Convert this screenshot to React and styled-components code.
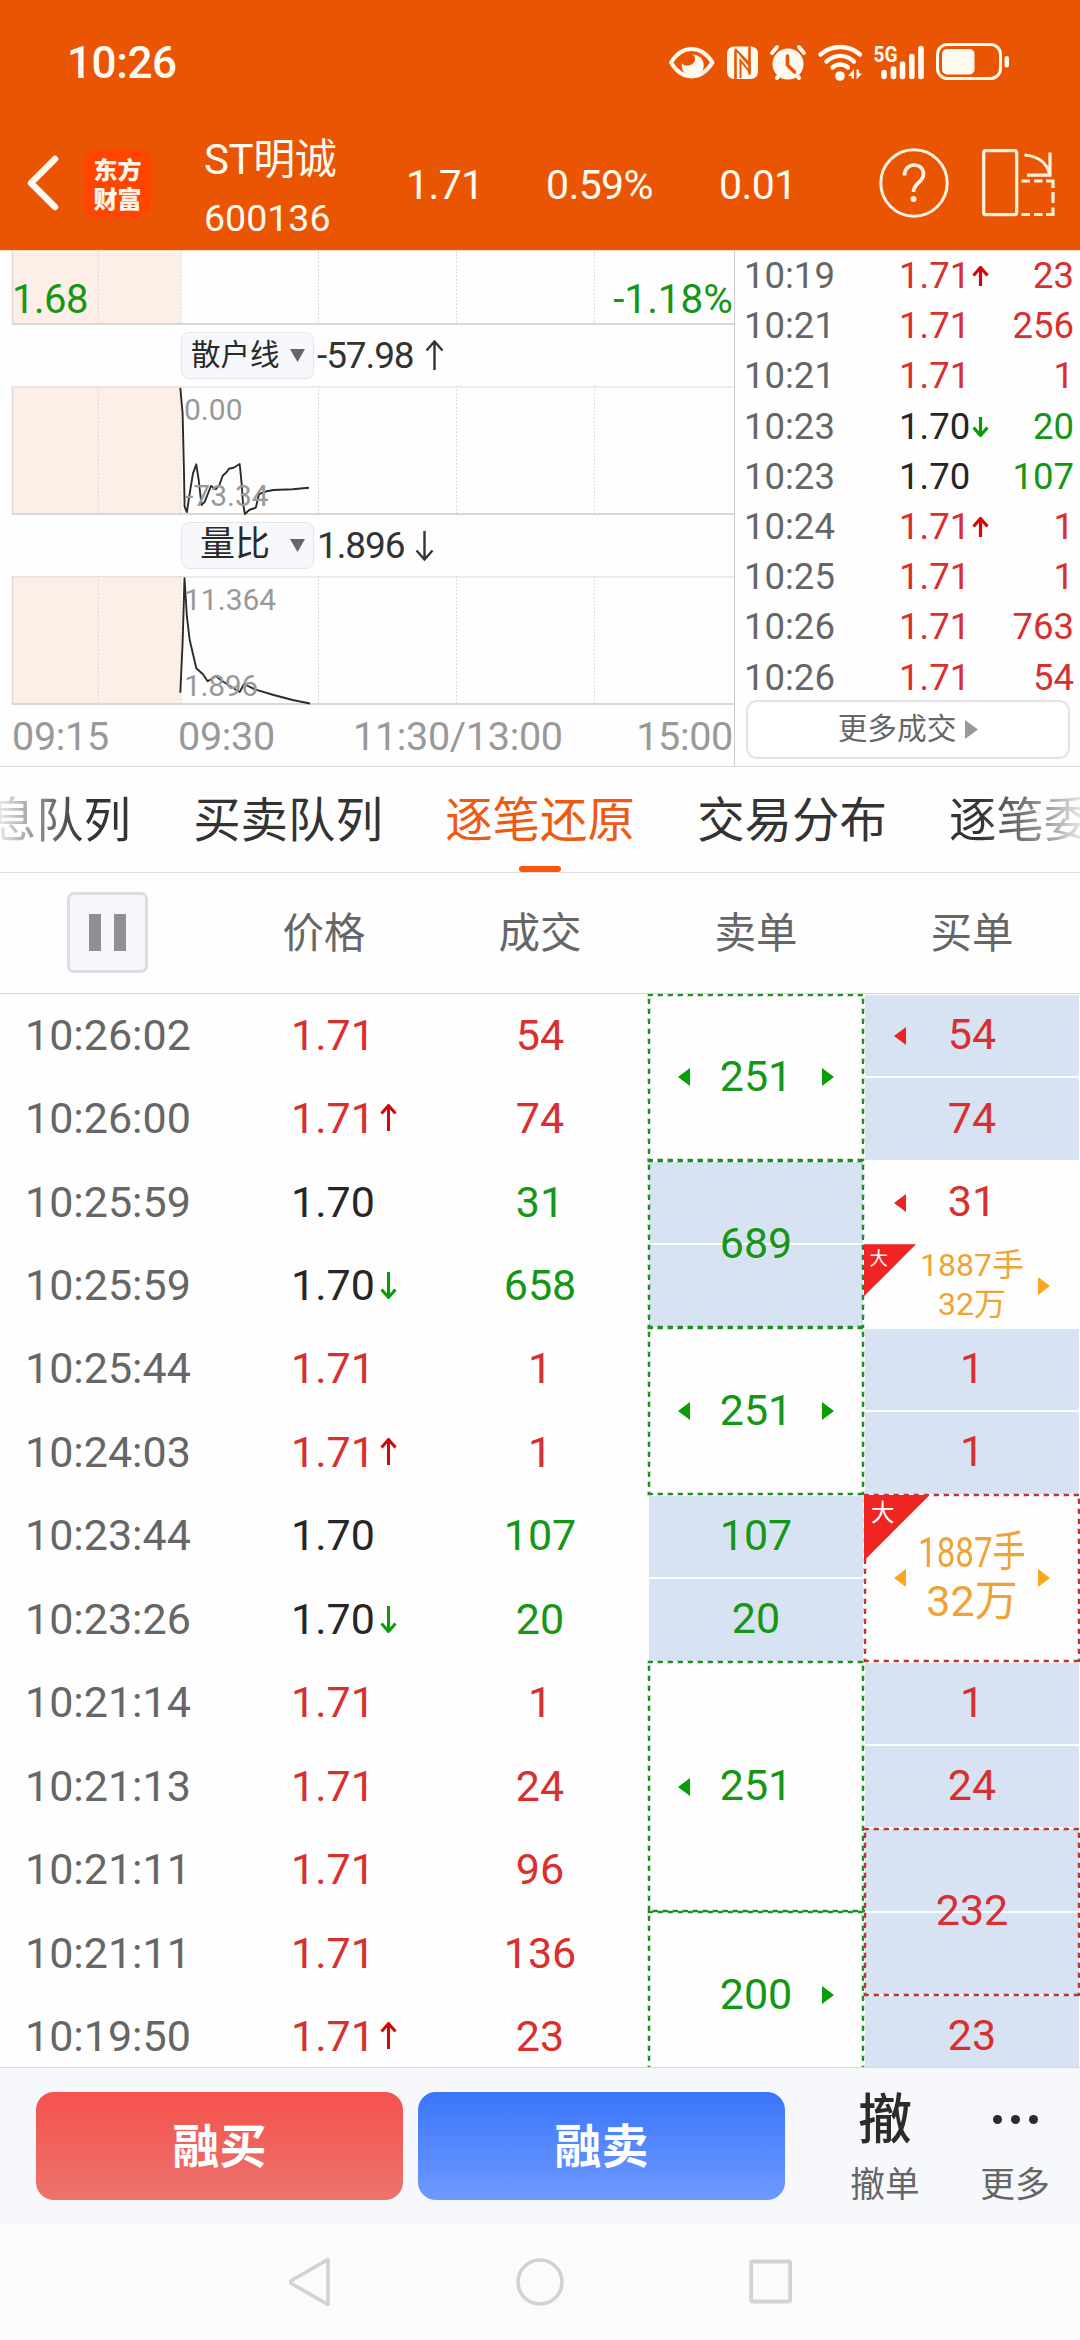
import React from 'react';
import styled, { createGlobalStyle, css } from 'styled-components';

const C = {
  brand: '#ea5504',
  red: '#d92f2f',
  green: '#159615',
  ink: '#262626',
  gray: '#666666',
  muted: '#999999',
  orange: '#efa337',
  blue: '#d7e3f2',
};
const ROW = 83.45;

const Global = createGlobalStyle`
  * { box-sizing: border-box; }
  html, body { margin: 0; padding: 0; }
  body {
    width: 1080px; height: 2340px; overflow: hidden; background: #fefefe;
    font-family: Roboto, "Noto Sans CJK SC", sans-serif;
  }
  svg { display: block; flex: none; }
`;

const Screen = styled.div`
  width: 1080px; height: 2340px; overflow: hidden;
  display: flex; flex-direction: column; background: #fefefe;
`;

/* ---------- top ---------- */
const Top = styled.header`
  height: 250px; flex: none; background: ${C.brand}; color: #fffaf0;
`;
const StatusBar = styled.div`
  height: 124px; padding: 0 70px 0 67px;
  display: flex; align-items: center; justify-content: space-between;
`;
const Clock = styled.div`
  font-size: 44px; font-weight: 500; line-height: 52px; letter-spacing: -0.4px; color: #fffaf0; padding-top: 2px;
`;
const NavBar = styled.div`
  height: 118px; padding-left: 26px; display: flex; align-items: center;
`;
const Logo = styled.div`
  width: 67px; height: 67px; margin-left: 24px; border-radius: 13px; background: #ff4400;
  display: flex; flex-direction: column; align-items: center; justify-content: center;
  font-family: "Noto Sans CJK SC", sans-serif; font-weight: 900; font-size: 24px; line-height: 29px; color: #fff4ea;
`;
const Stock = styled.div`
  width: 202px; margin-left: 53px; padding-top: 12px; display: flex; flex-direction: column;
`;
const StockName = styled.div`font-size: 42px; line-height: 58px; letter-spacing: -0.4px;`;
const StockCode = styled.div`font-size: 37.5px; line-height: 58px;`;
const Quote = styled.div`
  width: ${p => p.$w}px; font-size: 41px; line-height: 50px; padding-top: 3px; letter-spacing: -0.6px;
`;

/* ---------- charts ---------- */
const Market = styled.section`
  height: 517px; flex: none; display: flex; border-top: 1px solid #f5dccd; border-bottom: 1px solid #dcdcdc;
`;
const Charts = styled.div`
  width: 735px; flex: none; border-right: 1px solid #cccccc; display: flex; flex-direction: column;
`;
const IndicatorRow = styled.div`
  height: ${p => p.$h}px; padding: 0 0 0 181px; display: flex; align-items: center;
`;
const Picker = styled.button`
  width: 133px; height: 47px; padding: 0 8px 0 ${p => p.$pad}px; border: 1.5px solid #e4e7ea; border-radius: 8px;
  background: #f6f8fb; display: flex; align-items: center; justify-content: space-between;
  font-family: inherit; font-size: ${p => p.$size}px; line-height: 44px; color: #2a2a2a;
`;
const PickerLabel = styled.span`line-height: 44px; margin-top: -1px;`;
const IndicatorValue = styled.span`
  margin: 0 11px 0 3px; font-size: 37px; line-height: 44px; letter-spacing: -1.1px; color: #333333;
`;
const Axis = styled.div`
  height: 61px; padding: 2px 1px 0 12px; color: ${C.muted}; font-size: 39.5px; line-height: 60px; letter-spacing: -0.3px;
  display: grid; grid-template-columns: 166px 175px 1fr auto;
`;

const Trades = styled.div`flex: 1; display: flex; flex-direction: column;`;
const TradeRow = styled.div`
  height: 50.2px; flex: none; padding: 0 6px 0 9px; display: grid; grid-template-columns: 155px 1fr auto; align-items: center;
  font-size: 36.5px; line-height: 48px;
`;
const Tone = styled.span`
  color: ${p => C[p.$c]};
  display: flex; align-items: center; gap: ${p => p.$gap || 0}px;
`;
const MoreTrades = styled.button`
  width: 324px; height: 59px; flex: none; margin: -3px 0 0 11px; padding: 0; border: 2px solid #e3e3e3; border-radius: 11px; background: #fff;
  display: flex; align-items: center; justify-content: center; gap: 9px;
  font-family: inherit; font-size: 29.7px; line-height: 50px; color: ${C.gray};
`;

/* ---------- tabs ---------- */
const Tabs = styled.nav`
  height: 106px; flex: none; overflow: hidden; border-bottom: 1px solid #dedede;
  display: flex; justify-content: center; gap: 62px;
`;
const Tab = styled.div`
  width: 190px; flex: none; display: flex; flex-direction: column; align-items: ${p => p.$align || 'center'};
  justify-content: space-between; white-space: nowrap; font-size: 47.4px; line-height: 98px; padding-top: 5px;
  color: ${p => (p.$active ? '#ee5a12' : '#333333')};
`;
const FadeLabel = styled.span`
  ${p => p.$from && css`
    color: transparent; background-clip: text; -webkit-background-clip: text;
    background-image: linear-gradient(to ${p.$from}, #fefefe 0, #a8a8a8 38px, #333 ${p.$len}px);
  `}
`;
const Underline = styled.i`width: 42px; height: 6px; border-radius: 3px; background: #fa560c; margin-top: -6px;`;

/* ---------- ledger ---------- */
const LedgerHead = styled.div`
  height: 121px; flex: none; border-bottom: 1px solid #d2d4d6;
  display: grid; grid-template-columns: repeat(5, 216px); align-items: center; justify-items: center;
  font-size: 41.5px; line-height: 60px; color: ${C.gray};
`;
const HeadLabel = styled.span`padding-top: 2px;`;
const Pause = styled.button`
  width: 81px; height: 81px; margin: -1px 0 0 -2px; padding: 0; border: 3px solid #dadde1; border-radius: 7px; background: #f6f8fb;
  display: flex; align-items: center; justify-content: center; gap: 13px;
`;
const PauseBar = styled.i`width: 12px; height: 37px; background: #8f9093;`;

const LedgerWindow = styled.section`height: 1073px; flex: none; overflow: hidden; background: #fefefe;`;
const Ledger = styled.div`
  display: grid; grid-template-columns: repeat(5, 216px); grid-template-rows: repeat(13, ${ROW}px);
  font-size: 43px; line-height: 50px;
`;
const place = css`
  grid-column: ${p => p.$col}; grid-row: ${p => p.$row} / span ${p => p.$span || 1};
`;
const Fill = styled.div`${place} margin: 1px; background: ${C.blue};`;
const Cell = styled.div`
  ${place}
  display: flex; align-items: center; justify-content: ${p => (p.$left ? 'flex-start' : 'center')};
  padding: 0 0 2px ${p => p.$left || 0}px; gap: 5px;
  color: ${p => C[p.$c]};
`;
const dash = (dir, c, off) =>
  `repeating-linear-gradient(${dir}, ${c} 0 5px, transparent 5px 10px) ${off} no-repeat`;
const edges = (c, t, inset, phase) => [
  dash('to right', c, `${inset}px ${inset}px / calc(100% - ${2 * inset}px) ${t}px`),
  dash('to right', c, `${inset + phase}px calc(100% - ${inset}px) / calc(100% - ${2 * inset}px) ${t}px`),
  dash('to bottom', c, `${inset}px ${5 + inset}px / ${t}px calc(100% - ${6 + inset}px)`),
  dash('to bottom', c, `calc(100% - ${inset}px) ${5 + inset}px / ${t}px calc(100% - ${6 + inset}px)`),
].join(',');
const Order = styled.div`
  ${place}
  position: relative; z-index: 1; padding: 0 30px;
  display: grid; grid-template-columns: 12px minmax(0, 1fr) 12px; align-items: center; justify-items: center;
  color: ${p => C[p.$c]};
  ${p => p.$box && css`
    &::before {
      content: ""; position: absolute; inset: -1.5px -1px; pointer-events: none;
      background: ${edges(p.$box, 2, 1, p.$phase || 0)}, ${edges(`${p.$box}40`, 4, 0, p.$phase || 0)};
    }
  `}
`;
const OrderText = styled.div`
  width: 140px; padding-bottom: 3px; display: flex; flex-direction: column; align-items: center; white-space: nowrap;
  font-size: ${p => p.$size || 43}px; line-height: ${p => p.$lh || 50}px;
`;
const Condensed = styled.span`transform: scaleX(0.77);`;
const Badge = styled.span`
  position: absolute; left: 0; top: 0; width: ${p => p.$s}px; height: ${p => p.$s}px; background: #f12424;
  clip-path: polygon(0 0, 100% 0, 0 100%); color: #fff;
  font-size: ${p => p.$s * 0.355}px; line-height: 1; padding: ${p => p.$s * 0.11}px 0 0 ${p => p.$s * 0.105}px;
`;

/* ---------- bottom ---------- */
const ActionBar = styled.footer`
  height: 157px; flex: none; background: #f6f8fb; border-top: 1px solid #d3d9df; padding: 24px 0 0 36px; display: flex;
`;
const TradeButton = styled.button`
  width: 367px; height: 108px; margin-right: 15px; padding: 2px 0 0; border: 0; border-radius: 18px;
  background: linear-gradient(${p => p.$bg}); color: #fff;
  font-family: inherit; font-size: 47px; font-weight: 700; line-height: 60px;
`;
const Action = styled.div`
  width: ${p => p.$w}px; margin-left: ${p => p.$ml}px; display: flex; flex-direction: column; align-items: center;
  font-size: 34.7px; line-height: 50px; color: ${C.gray};
`;
const ActionGlyph = styled.span`
  height: 54px; margin-bottom: 14px; padding-top: ${p => (p.$drop || 0)}px; display: flex; align-items: center; gap: 9px;
  font-size: 54px; line-height: 54px; font-weight: 500; color: #2b2b2b;
`;
const Dot = styled.i`width: 9px; height: 9px; border-radius: 50%; background: #2b2b2b;`;
const SystemNav = styled.div`
  flex: 1; background: #fbfbfb; padding: 0 288px 0 288px; display: flex; align-items: center; justify-content: space-between;
`;

/* ---------- drawings ---------- */
const StatusIcons = () => (
  <svg width="344" height="42" viewBox="666 40 344 42" fill="none" stroke="#fffaf0">
    <path d="M671 61.5C682 43.5 701 43.5 712.500 61.5C701 80 682 80 671 61.500Z" strokeWidth="4" strokeLinejoin="round" />
    <path d="M692 53.500A11 11 0 1 1 682 62C684 66.500 694 65 695 59C695.500 56 694 54 692 53.500Z" fill="#fffaf0" stroke="none" />
    <rect x="727" y="45.500" width="31" height="32.500" rx="7" fill="#fffaf0" stroke="none" />
    <g stroke={C.brand}>
      <path d="M735.500 78V49.500" strokeWidth="2.600" />
      <path d="M749.500 45.500V73.500" strokeWidth="2.600" />
      <path d="M735 48L750 63" strokeWidth="2" />
      <path d="M740.500 77V59.500L750 71.500" strokeWidth="2" />
      <path d="M740 54L749.500 65" strokeWidth="1.200" />
    </g>
    <circle cx="788" cy="63" r="15.500" fill="#fffaf0" stroke="none" />
    <path d="M772 52l5-6M804 52l-5-6M777 77l4-5M799 77l-4-5" strokeWidth="4" strokeLinecap="round" />
    <path d="M787.500 55v9l7 7" stroke={C.brand} strokeWidth="3.600" strokeLinecap="round" strokeLinejoin="round" />
    <path d="M820.500 53.500C832 43.500 848.500 43.500 860 53.500M826.500 60.500C835 53 845.500 53 854 60.500M832.500 66.500C837 62.500 843.500 62.500 848 66.500" strokeWidth="4.400" strokeLinecap="round" />
    <circle cx="840" cy="75" r="4.800" fill="#fffaf0" stroke="none" />
    <path d="M848 75l6-7v9.500h-2.500V75zM862 72.500l-5.500 6v-10h2.500v4z" fill="#fffaf0" stroke="none" />
    <text x="873.500" y="60.500" fontSize="22.500" fontWeight="700" fill="#fffaf0" stroke="none" textLength="24" lengthAdjust="spacingAndGlyphs">5G</text>
    <path d="M884 71.500V75.500M893.500 68V75.500M902.500 63V75.500M911.800 55.500V75.500M921 47.500V75.500" strokeWidth="5.600" strokeLinecap="round" />
    <rect x="937.500" y="43.500" width="63" height="34" rx="10" strokeWidth="3" />
    <rect x="942" y="48" width="32.500" height="25.500" rx="5" fill="#fffaf0" stroke="none" />
    <rect x="1004.500" y="55" width="4.500" height="11.500" rx="2.200" fill="#fffaf0" stroke="none" />
  </svg>
);
const BackIcon = () => (
  <svg width="34" height="60" viewBox="0 0 34 60"><path d="M29 6L5 30L29 54" fill="none" stroke="#fffaf0" strokeWidth="6.500" strokeLinecap="round" strokeLinejoin="round" /></svg>
);
const HelpIcon = () => (
  <svg width="70" height="70" viewBox="0 0 70 70" fill="none" stroke="#fff3df">
    <circle cx="35" cy="35" r="33.200" strokeWidth="3" />
    <path d="M25.500 27.500C25.500 13.500 44.500 14 44.500 26C44.500 34.500 34.500 35 34.500 44" strokeWidth="3.700" />
    <circle cx="34.500" cy="51" r="3" fill="#fff3df" stroke="none" />
  </svg>
);
const RotateIcon = () => (
  <svg width="74" height="68" viewBox="0 0 74 68" fill="none" stroke="#fff3df" strokeWidth="3.200">
    <rect x="1.700" y="1.700" width="33" height="64" rx="2" />
    <path d="M42.500 6C56 7 65 14 67.500 25" />
    <path d="M68 3.500V26.200H45" />
    <path d="M39.500 32H48M52 32H60.500M64 32H71V39M71 43V54M71 58.500V65.500H64M60.500 65.500H52M48 65.500H39.500" />
  </svg>
);
const Arrow = ({ dir, color, w, h, sw }) => (
  <svg width={w} height={h} viewBox={`0 0 ${w} ${h}`}>
    <path
      d={`M${w / 2} 1V${h - 1}M1.500 ${w / 2 + 1}L${w / 2} 1.500L${w - 1.5} ${w / 2 + 1}`}
      transform={dir === 'down' ? `rotate(180 ${w / 2} ${h / 2})` : undefined}
      fill="none" stroke={color} strokeWidth={sw}
    />
  </svg>
);
const Tri = ({ dir, color, w = 12, h = 18 }) => {
  const d = { left: `M${w} 0V${h}L0 ${h / 2}Z`, right: `M0 0V${h}L${w} ${h / 2}Z`, down: `M0 0H${w}L${w / 2} ${h}Z` }[dir];
  return <svg width={w} height={h}><path d={d} fill={color} /></svg>;
};

const Plot = ({ top, bottom, height, openTop, line, labels }) => (
  <svg width="734" height={height} viewBox={`0 ${top} 734 ${height}`}>
    <rect x="12" y={top} width="169" height={bottom - top} fill="#fdeee7" />
    {[98, 181, 318.5, 456.5, 594.500].map(x => (
      <line key={x} x1={x} x2={x} y1={top} y2={bottom} stroke="#d4d2d1" strokeWidth="1" strokeDasharray="1.500 2" />
    ))}
    <line x1="12.500" x2="12.500" y1={top} y2={bottom} stroke="#dedad8" strokeWidth="1.500" />
    {!openTop && <line x1="12" x2="734" y1={top + 1} y2={top + 1} stroke="#dddbda" />}
    <line x1="12" x2="734" y1={bottom} y2={bottom} stroke="#d9d7d6" strokeWidth="2" />
    {line && <polyline points={line} fill="none" stroke="#2b2b2b" strokeWidth="1.900" strokeLinejoin="round" />}
    {labels.map(l => (
      <text key={l.t} x={l.x} y={l.y} fontSize={l.s || 30} fill={l.c || C.muted} textAnchor={l.a || 'start'} letterSpacing={l.ls || 0}>{l.t}</text>
    ))}
  </svg>
);
const LINE_RETAIL = '180.3,388 182.6,413 184,473 184.6,506.700 186.9,512 189.7,493.3 193,473.3 196.3,464.3 198.7,480 201.5,505 204.8,501.7 211,486 215.7,489.3 219.4,485 222.7,475.7 226.5,472.3 228.9,468.7 233.6,467.7 239.7,464 241.6,483.3 243,503.3 244.9,514 249.2,510 255.8,507.7 259,494 266.6,491.3 273.7,490 292.6,489.3 309,487.7';
const LINE_RATIO = '180.3,692.7 182.6,643 184.5,578.3 186.9,616.7 189.7,640 196.3,668.3 203,674.3 207.6,681.3 211,679.3 215.7,676 221.8,680.7 231.2,686.7 239.7,692 244,684 254.8,689.3 273.7,695 292.6,700 310,703.500';

/* ---------- data ---------- */
const trades = [
  ['10:19', '1.71', 'up', '23', 'red'], ['10:21', '1.71', '', '256', 'red'], ['10:21', '1.71', '', '1', 'red'],
  ['10:23', '1.70', 'down', '20', 'green'], ['10:23', '1.70', '', '107', 'green'], ['10:24', '1.71', 'up', '1', 'red'],
  ['10:25', '1.71', '', '1', 'red'], ['10:26', '1.71', '', '763', 'red'], ['10:26', '1.71', '', '54', 'red'],
];
const rows = [
  ['10:26:02', '1.71', '', '54', 'red'], ['10:26:00', '1.71', 'up', '74', 'red'], ['10:25:59', '1.70', '', '31', 'green'],
  ['10:25:59', '1.70', 'down', '658', 'green'], ['10:25:44', '1.71', '', '1', 'red'], ['10:24:03', '1.71', 'up', '1', 'red'],
  ['10:23:44', '1.70', '', '107', 'green'], ['10:23:26', '1.70', 'down', '20', 'green'], ['10:21:14', '1.71', '', '1', 'red'],
  ['10:21:13', '1.71', '', '24', 'red'], ['10:21:11', '1.71', '', '96', 'red'], ['10:21:11', '1.71', '', '136', 'red'],
  ['10:19:50', '1.71', 'up', '23', 'red'],
];
const sells = [
  { row: 1, span: 2, t: '251', l: 1, r: 1, box: 1 }, { row: 3, span: 2, t: '689', box: 1 },
  { row: 5, span: 2, t: '251', l: 1, r: 1, box: 1 }, { row: 7, t: '107' }, { row: 8, t: '20' },
  { row: 9, span: 3, t: '251', l: 1, box: 1, phase: 5 }, { row: 12, span: 2, t: '200', r: 1, box: 1 },
];
const buys = [
  { row: 1, t: '54', l: 1 }, { row: 2, t: '74' }, { row: 3, t: '31', l: 1 },
  { row: 4, big: 'small', r: 1 }, { row: 5, t: '1' }, { row: 6, t: '1' },
  { row: 7, span: 2, big: 'large', l: 1, r: 1, box: 1 }, { row: 9, t: '1' }, { row: 10, t: '24' },
  { row: 11, span: 2, t: '232', box: 1 }, { row: 13, t: '23' },
];
const fills = [[4, [3, 4, 7, 8]], [5, [1, 2, 5, 6, 9, 10, 11, 12, 13]]];
const arrowColor = { up: '#d00808', down: '#0a9a0a' };

const OrderCell = ({ o, col }) => {
  const tone = o.big ? 'orange' : col === 4 ? 'green' : 'red';
  const tri = o.big ? '#ffa620' : col === 4 ? '#06a006' : '#ef2323';
  return (
    <Order $col={col} $row={o.row} $span={o.span} $c={tone} $phase={o.phase} $box={o.box && (col === 4 ? '#1f8f24' : '#bf3436')}>
      {o.big && <Badge $s={o.big === 'small' ? 52 : 66}>大</Badge>}
      {o.l ? <Tri dir="left" color={tri} /> : <i />}
      {!o.big && <OrderText>{o.t}</OrderText>}
      {o.big === 'small' && <OrderText $size={32} $lh={39}><span>1887手</span><span>32万</span></OrderText>}
      {o.big === 'large' && <OrderText $lh={49}><Condensed>1887手</Condensed><span>32万</span></OrderText>}
      {o.r ? <Tri dir="right" color={tri} /> : <i />}
    </Order>
  );
};

export default function App() {
  return (
    <Screen>
      <Global />
      <Top>
        <StatusBar><Clock>10:26</Clock><StatusIcons /></StatusBar>
        <NavBar>
          <BackIcon />
          <Logo><span>东方</span><span>财富</span></Logo>
          <Stock><StockName>ST明诚</StockName><StockCode>600136</StockCode></Stock>
          <Quote $w={140}>1.71</Quote>
          <Quote $w={173}>0.59%</Quote>
          <Quote $w={160}>0.01</Quote>
          <HelpIcon />
          <svg width="33" height="1" />
          <RotateIcon />
        </NavBar>
      </Top>

      <Market>
        <Charts>
          <Plot top={251} bottom={324} height={74} openTop labels={[
            { t: '1.68', x: 12, y: 313, s: 40, c: C.green, ls: -0.5 },
            { t: '-1.18%', x: 733, y: 313, s: 40.5, c: C.green, a: 'end' },
          ]} />
          <IndicatorRow $h={61}>
            <Picker $pad={9} $size={29.5}><PickerLabel>散户线</PickerLabel><Tri dir="down" color="#666" w={15} h={13} /></Picker>
            <IndicatorValue>-57.98</IndicatorValue>
            <Arrow dir="up" color="#333" w={19} h={31} sw={2.4} />
          </IndicatorRow>
          <Plot top={386} bottom={514} height={129} line={LINE_RETAIL} labels={[
            { t: '0.00', x: 184, y: 420 }, { t: '-73.34', x: 185, y: 506 },
          ]} />
          <IndicatorRow $h={61}>
            <Picker $pad={18} $size={35}><PickerLabel>量比</PickerLabel><Tri dir="down" color="#666" w={15} h={13} /></Picker>
            <IndicatorValue>1.896</IndicatorValue>
            <Arrow dir="down" color="#333" w={19} h={31} sw={2.4} />
          </IndicatorRow>
          <Plot top={576} bottom={704} height={129} line={LINE_RATIO} labels={[
            { t: '11.364', x: 184, y: 610 }, { t: '1.896', x: 184, y: 696, ls: -0.3 },
          ]} />
          <Axis><span>09:15</span><span>09:30</span><span>11:30/13:00</span><span>15:00</span></Axis>
        </Charts>
        <Trades>
          {trades.map(([time, price, dir, qty, c], i) => (
            <TradeRow key={i}>
              <Tone $c="gray">{time}</Tone>
              <Tone $c={price === '1.71' ? 'red' : 'ink'} $gap={2}>
                {price}{dir && <Arrow dir={dir} color={arrowColor[dir]} w={17} h={21} sw={3.2} />}
              </Tone>
              <Tone $c={c}>{qty}</Tone>
            </TradeRow>
          ))}
          <MoreTrades>更多成交<Tri dir="right" color={C.muted} w={13} h={19} /></MoreTrades>
        </Trades>
      </Market>

      <Tabs>
        <Tab $align="flex-end"><FadeLabel $from="right" $len={92}>息队列</FadeLabel></Tab>
        <Tab>买卖队列</Tab>
        <Tab $active>逐笔还原<Underline /></Tab>
        <Tab>交易分布</Tab>
        <Tab $align="flex-start"><FadeLabel $from="left" $len={110}>逐笔委</FadeLabel></Tab>
      </Tabs>

      <LedgerHead>
        <Pause><PauseBar /><PauseBar /></Pause>
        <HeadLabel>价格</HeadLabel><HeadLabel>成交</HeadLabel><HeadLabel>卖单</HeadLabel><HeadLabel>买单</HeadLabel>
      </LedgerHead>

      <LedgerWindow>
        <Ledger>
          {fills.flatMap(([col, list]) => list.map(r => <Fill key={`${col}-${r}`} $col={col} $row={r} />))}
          {rows.map(([time, price, dir, qty, c], i) => (
            <React.Fragment key={i}>
              <Cell $col={1} $row={i + 1} $left={25} $c="gray">{time}</Cell>
              <Cell $col={2} $row={i + 1} $left={75} $c={price === '1.71' ? 'red' : 'ink'}>
                {price}{dir && <Arrow dir={dir} color={arrowColor[dir]} w={17} h={28} sw={3} />}
              </Cell>
              <Cell $col={3} $row={i + 1} $c={c}>{qty}</Cell>
            </React.Fragment>
          ))}
          {sells.map(o => <OrderCell key={`s${o.row}`} o={o} col={4} />)}
          {buys.map(o => <OrderCell key={`b${o.row}`} o={o} col={5} />)}
        </Ledger>
      </LedgerWindow>

      <ActionBar>
        <TradeButton $bg="#f5524c, #ec736d">融买</TradeButton>
        <TradeButton $bg="#3a75fa, #6e9aff">融卖</TradeButton>
        <Action $w={72} $ml={49}><ActionGlyph $drop={3}>撤</ActionGlyph>撤单</Action>
        <Action $w={72} $ml={58}><ActionGlyph><Dot /><Dot /><Dot /></ActionGlyph>更多</Action>
      </ActionBar>
      <SystemNav>
        <svg width="43" height="50" viewBox="0 0 43 50"><path d="M40 3V47Q40 48 39 47L3.500 26.500Q1.500 25 3.500 23.500L39 3Q40 2 40 3Z" fill="none" stroke="#d2d2d2" strokeWidth="3.600" /></svg>
        <svg width="50" height="50" viewBox="0 0 50 50"><circle cx="25" cy="25" r="22" fill="none" stroke="#d2d2d2" strokeWidth="3.600" /></svg>
        <svg width="43" height="50" viewBox="0 0 43 50"><rect x="2.200" y="4.500" width="39" height="40" rx="1.500" fill="none" stroke="#d2d2d2" strokeWidth="3.800" /></svg>
      </SystemNav>
    </Screen>
  );
}
